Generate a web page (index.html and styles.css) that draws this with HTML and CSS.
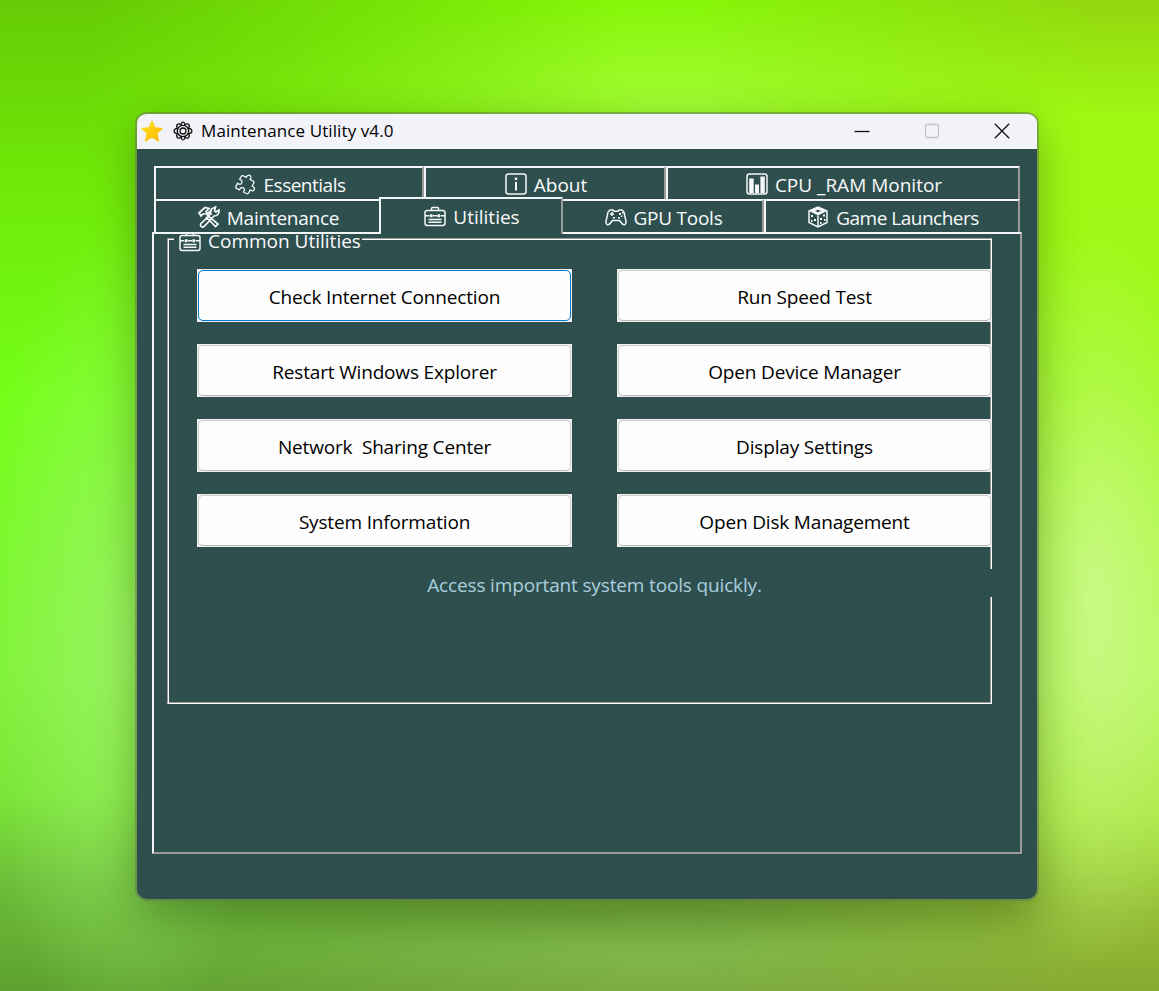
FILE: index.html
```
<!DOCTYPE html>
<html lang="en">
<head>
<meta charset="utf-8">
<title>Maintenance Utility v4.0</title>
<link rel="stylesheet" href="styles.css">
</head>
<body>
<svg class="defs" aria-hidden="true">
  <symbol id="toolbox" viewBox="0 0 22 22">
    <path d="M7.500 5V3.500q0-1 1-1h5q1 0 1 1V5M1 10.800h4.500m3.500 0h4m3.500 0H21M4.500 14.500h13M4.500 17.300h13"/>
    <rect x="1" y="5.500" width="20" height="15" rx="2.200"/>
    <path class="solid" d="M6 9.300h2.600v3H6zM13.400 9.300H16v3h-2.600z"/>
  </symbol>
</svg>
<main class="window">
  <header class="titlebar">
    <svg class="star" viewBox="0 0 22 22"><path fill="url(#gold)" stroke="url(#gold)" stroke-linejoin="round" d="M11 .8l3 6.900 7.400.7-5.500 5.100 1.700 7.700-6.600-4-6.600 4 1.700-7.700L.6 8.400 8 7.700z"/><defs><linearGradient id="gold" x2="1" y2="1"><stop stop-color="#ffe01c"/><stop offset="1" stop-color="#fdb800"/></linearGradient></defs></svg>
    <svg class="gear" viewBox="0 0 20 20"><circle cx="10" cy="10" r="3"/><circle cx="10" cy="10" r="5.700"/><path d="M8.300 4.500C7.500 0 12.500 0 11.700 4.500C14.300.7 17.800 4.200 15.500 7.300C20 7.500 20 12.500 15.500 12.700C17.800 15.800 14.300 19.300 11.700 15.500C12.500 20 7.500 20 8.300 15.500C5.700 19.300 2.200 15.800 4.500 12.700C0 12.500 0 7.500 4.500 7.300C2.200 4.200 5.700.7 8.300 4.500z"/></svg>
    <h1 class="title">Maintenance Utility v4.0</h1>
    <div class="controls">
      <svg viewBox="0 0 16 16"><path d="M.5 8.500h15"/></svg>
      <svg class="disabled" viewBox="0 0 16 16"><rect x="1.500" y="1.500" width="13" height="13" rx="1"/></svg>
      <svg viewBox="0 0 16 16"><path d="M.8.800l14.400 14.400M15.200.800L.8 15.200"/></svg>
    </div>
  </header>

  <div class="content">
    <nav class="tabs upper">
      <div class="tab"><svg class="icon" viewBox="0 0 22 22"><path transform="rotate(28 11 11) translate(1.500 .8) scale(.84)" d="M20.500 11H19V7c0-1.100-.9-2-2-2h-4V3.500a2.500 2.500 0 0 0-5 0V5H4c-1.100 0-2 .9-2 2v3.800h1.500a2.700 2.700 0 0 1 0 5.400H2V20c0 1.100.9 2 2 2h3.800v-1.500a2.700 2.700 0 0 1 5.400 0V22H17c1.100 0 2-.9 2-2v-4h1.500a2.500 2.500 0 0 0 0-5z"/></svg><span class="tight">Essentials</span></div>
      <div class="tab"><svg class="icon" viewBox="0 0 22 22"><rect x="1" y="1" width="20" height="20" rx="2.500"/><path class="solid" d="M9.800 4.500h2.400v2.400H9.800zM10 9h2v8.500h-2z"/></svg><span>About</span></div>
      <div class="tab"><svg class="icon" viewBox="0 0 22 22"><rect x="1" y="1" width="20" height="20" rx="2.500"/><path class="solid" d="M3.200 5.500h4.500V20H3.200zM9 11.500h4V20H9zM14.400 3.500h4.400V20h-4.400z"/></svg><span>CPU _RAM Monitor</span></div>
    </nav>
    <nav class="tabs lower">
      <div class="tab"><svg class="icon bold" viewBox="0 0 22 22"><path d="M1 7l6-5.500 4 1-3 3 1.500 2L12 5.500l1 2.500L4.500 8 3 10zM9 9l11 9-2.500 2.500L8 11M12 8l1.500-5 4-2-1 4 1.500 1 3-2c.5 4-2 6-5 6L6 20.500c-2 1.500-4.500-1-3-3L12 9"/></svg><span class="snug">Maintenance</span></div>
      <div class="tab selected"><svg class="icon"><use href="#toolbox"/></svg><span>Utilities</span></div>
      <div class="tab"><svg class="icon" viewBox="0 0 22 22"><path d="M5 4h3l1 1.300h4L14 4h3l2 2 2 9.500c.3 4-2.500 4-4 2l-2.500-3h-7L5 17.500c-1.500 2-4.300 2-4-2L3 6z"/><path d="M5 8h4M7 6v4M8 11.800h2M13 11.800h2"/><path class="solid" d="M14 7h2v2h-2zM17 6h1.500v1.500H17zM16 9.500h1.500V11H16z"/></svg><span class="snug">GPU Tools</span></div>
      <div class="tab"><svg class="icon" viewBox="0 0 22 22"><path d="M2 5l9-4 9 4v11.500L11 21l-9-4.500zM11 9.500V21"/><path class="solid" fill-rule="evenodd" d="M2 5l9-4 9 4-9 4.500zM8 5l3 1.200L14 5l-3-1.200z"/><path class="solid" d="M4 9h2v2H4zM7 13h2v2H7zM4 14h1.500v2H4zM16 8.500h2v2h-2zM13 12h2v2h-2zM17 13h1.500v2H17zM13 16h1.500v2H13z"/></svg><span class="tight">Game Launchers</span></div>
    </nav>
    <section class="pane">
      <div class="group">
        <h2 class="legend"><svg class="icon" viewBox="0 4 22 18"><use href="#toolbox" width="22" height="22"/></svg><span>Common Utilities</span></h2>
        <div class="buttons">
          <button class="btn focused"><span>Check Internet Connection</span></button>
          <button class="btn"><span>Run Speed Test</span></button>
          <button class="btn"><span>Restart Windows Explorer</span></button>
          <button class="btn"><span>Open Device Manager</span></button>
          <button class="btn"><span>Network&nbsp; Sharing Center</span></button>
          <button class="btn"><span>Display Settings</span></button>
          <button class="btn"><span>System Information</span></button>
          <button class="btn"><span>Open Disk Management</span></button>
        </div>
        <p class="hint">Access important system tools quickly.</p>
      </div>
    </section>
  </div>
</main>
</body>
</html>
```
FILE: styles.css
```
* { box-sizing: border-box; }

body {
  position: relative;
  z-index: 0;
  margin: 0;
  height: 991px;
  padding: 114px 122px 92px 137px;
  overflow: hidden;
  font-family: "Open Sans", "Noto Sans", sans-serif;
  background:
    radial-gradient(ellipse 500px 110px at 690px 110px, rgba(175, 255, 75, .6), transparent),
    linear-gradient(#86f608, #96fb16 25%, #9bea28 80%, #76ad3e 92%, #80b84c 96%, #7cab42);
}

/* Wallpaper: the left and right sides fade into the centre. */
body::before,
body::after {
  content: "";
  position: absolute;
  inset: 0;
  z-index: -1;
}
body::before {
  background:
    radial-gradient(ellipse 150px 420px at 125px 640px, rgba(165, 245, 120, .7), transparent),
    linear-gradient(#66cb06, #70e808 18%, #74ff18 40%, #7ef233 68%, #78e532 80%, #6cbd38 89%, #5ea02f);
  -webkit-mask-image: linear-gradient(90deg, #000 90px, transparent 620px);
  mask-image: linear-gradient(90deg, #000 90px, transparent 620px);
}
body::after {
  background:
    radial-gradient(ellipse 150px 370px at 1090px 600px, rgba(205, 250, 145, .85), transparent),
    linear-gradient(#92d60f, #a0f813 12%, #9ff91a 40%, #b1f750 68%, #a8e63c 82%, #94bd35 92%, #87a930);
  -webkit-mask-image: linear-gradient(270deg, #000 60px, transparent 460px);
  mask-image: linear-gradient(270deg, #000 60px, transparent 460px);
}

.defs { position: absolute; width: 0; height: 0; }

.window {
  width: 900px;
  height: 785px;
  border-radius: 10px;
  background: #2f4f4f;
  box-shadow: 0 0 0 2px rgba(100, 115, 90, .5), 0 14px 44px rgba(30, 55, 10, .38);
}

.titlebar {
  display: flex;
  align-items: center;
  height: 35px;
  padding: 0 27px 2px 4px;
  border-radius: 9px 9px 0 0;
  background: #f1f3f9;
  color: #000;
}
.star { width: 22px; height: 22px; overflow: visible; }
.gear { width: 20px; height: 20px; margin: 0 8px 0 10px; fill: none; stroke: #111; stroke-width: 1.3; }
.title { margin: 0; font-size: 17px; font-weight: 400; letter-spacing: .1px; }
.controls { display: flex; gap: 54px; margin-left: auto; }
.controls svg { width: 16px; height: 16px; fill: none; stroke: #111; stroke-width: 1.3; }
.controls .disabled { stroke: #c3c4ca; }

.content { padding: 17px 15px 0; }

.icon { width: 22px; height: 22px; flex: none; fill: none; stroke: #f4f8f8; stroke-width: 1.5; }
.bold { stroke-width: 1.7; }
.solid { fill: #f4f8f8; stroke: none; }

.tabs { display: grid; height: 33px; margin: 0 2px; }
.upper { grid-template-columns: 270px 242px 354px; }
.lower { grid-template-columns: 225px 184px 201px 256px; }
.tab {
  display: flex;
  align-items: center;
  justify-content: center;
  gap: 7px;
  padding: 2px 0 0 2px;
  border: 2px solid #f3f6f6;
  border-right-color: #9b9b9b;
  border-bottom: 0;
  color: #f8fafa;
  font-size: 19px;
  white-space: nowrap;
}
.tab .icon { margin-top: -2px; }
.tight { letter-spacing: -.5px; }
.snug { letter-spacing: -.25px; }
.lower .tab:first-child { border-right: 0; }
.lower .selected {
  position: relative;
  z-index: 1;
  margin: -2px 0;
  padding-top: 0;
  background: #2f4f4f;
}
.lower .selected + .tab { border-left: 0; }

.pane {
  height: 622px;
  padding: 4px 28px 0 13px;
  border: 2px solid #f3f6f6;
  border-right-color: #9b9b9b;
  border-bottom-color: #9b9b9b;
}
.group {
  height: 466px;
  padding-left: 28px;
  border: 1px solid;
  border-color: #999 #fff #fff #999;
  box-shadow: inset 1px 1px #fff, inset -1px -1px #999;
}
.legend {
  display: flex;
  align-items: flex-end;
  gap: 7px;
  width: 188px;
  height: 22px;
  margin: -5px 0 13px -22px;
  padding-left: 5px;
  background: #2f4f4f;
  color: #f8fafa;
  font-size: 19px;
  font-weight: 400;
  line-height: 30px;
  white-space: nowrap;
}
.legend .icon { height: 18px; margin-bottom: 4px; }
.buttons {
  display: grid;
  grid-template-columns: 375px 375px;
  column-gap: 45px;
  row-gap: 22px;
  width: 795px;
  margin-left: 1px;
}
.btn {
  height: 53px;
  padding: 1px;
  border: 0;
  background: #f0f0f0;
  color: #000;
  font: 19px "Open Sans", "Noto Sans", sans-serif;
  letter-spacing: -.17px;
}
.btn span {
  display: block;
  height: 51px;
  padding-top: 2px;
  border: 1px solid #ccc;
  border-bottom-color: #b9b9b9;
  border-radius: 5px;
  background: #fdfdfd;
  line-height: 48px;
}
.btn.focused span { border-color: #0078d4; }
.hint {
  width: 795px;
  height: 28px;
  margin: 22px 0 0 1px;
  padding-top: 2px;
  background: #2f4f4f;
  color: #a9cfde;
  font-size: 19px;
  letter-spacing: -.15px;
  line-height: 28px;
  text-align: center;
}
```
